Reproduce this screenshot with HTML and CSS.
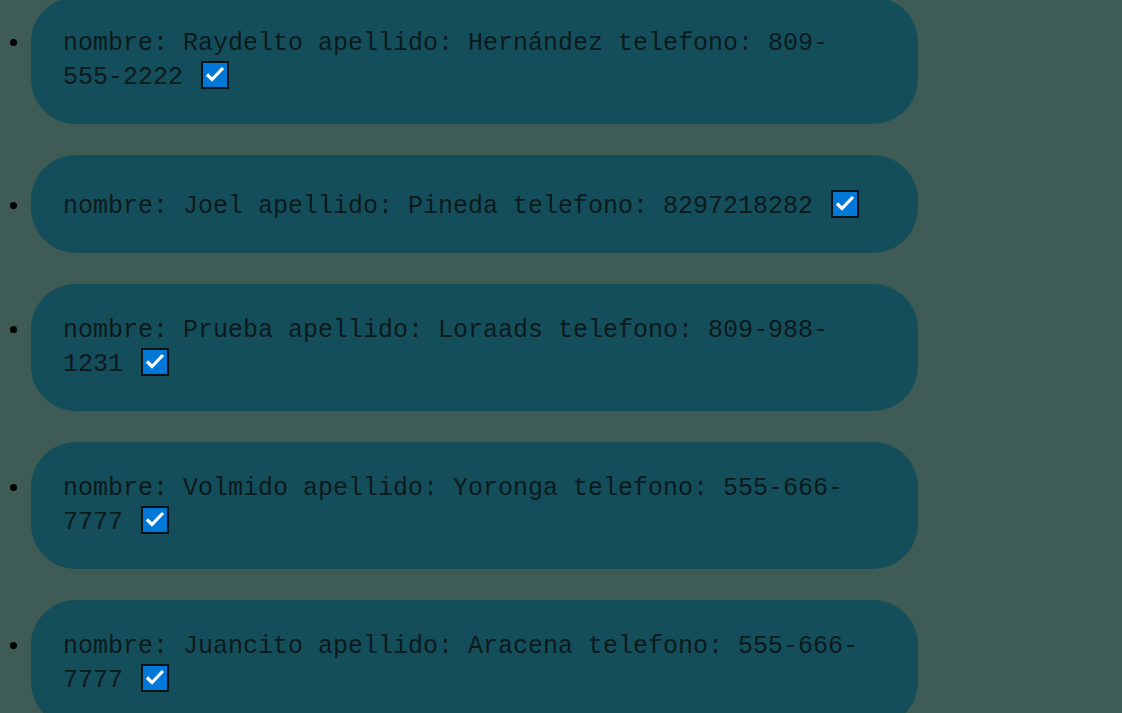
FILE: index.html
```html
<!DOCTYPE html>
<html lang="es">
<head>
<meta charset="utf-8">
<title>Contactos</title>
<link rel="stylesheet" href="styles.css">
</head>
<body>
<ul class="contacts">
  <li class="contact">nombre: Raydelto apellido: Hernández telefono: 809-555-2222 <span class="check"><svg viewBox="0 0 24 24" width="24" height="24"><path d="M4 11.5L9 16.5L20 5" fill="none" stroke="#fff" stroke-width="3.2"/></svg></span></li>
  <li class="contact">nombre: Joel apellido: Pineda telefono: 8297218282 <span class="check"><svg viewBox="0 0 24 24" width="24" height="24"><path d="M4 11.5L9 16.5L20 5" fill="none" stroke="#fff" stroke-width="3.2"/></svg></span></li>
  <li class="contact">nombre: Prueba apellido: Loraads telefono: 809-988-1231 <span class="check"><svg viewBox="0 0 24 24" width="24" height="24"><path d="M4 11.5L9 16.5L20 5" fill="none" stroke="#fff" stroke-width="3.2"/></svg></span></li>
  <li class="contact">nombre: Volmido apellido: Yoronga telefono: 555-666-7777 <span class="check"><svg viewBox="0 0 24 24" width="24" height="24"><path d="M4 11.5L9 16.5L20 5" fill="none" stroke="#fff" stroke-width="3.2"/></svg></span></li>
  <li class="contact">nombre: Juancito apellido: Aracena telefono: 555-666-7777 <span class="check"><svg viewBox="0 0 24 24" width="24" height="24"><path d="M4 11.5L9 16.5L20 5" fill="none" stroke="#fff" stroke-width="3.2"/></svg></span></li>
</ul>
</body>
</html>
```
FILE: styles.css
```css
html, body {
  margin: 0;
  background: #3e5b55;
  overflow: hidden;
}
.contacts {
  margin: -3px 0 0 0;
  padding: 0 0 0 31px;
  font-family: "Courier New", "Nimbus Mono PS", "FreeMono", "Liberation Mono", monospace;
  font-size: 25px;
  color: #0b1a1d;
}
.contact {
  width: 887px;
  box-sizing: border-box;
  background: #154e5b;
  border-radius: 45px;
  padding: 32px;
  margin-bottom: 31px;
}
.contact::marker {
  color: #000;
}
.check {
  display: inline-block;
  width: 24px;
  height: 24px;
  border: 2px solid #0a1418;
  background: #0078d7;
  margin: 3px;
  vertical-align: -8px;
}
.check svg {
  display: block;
}
```
